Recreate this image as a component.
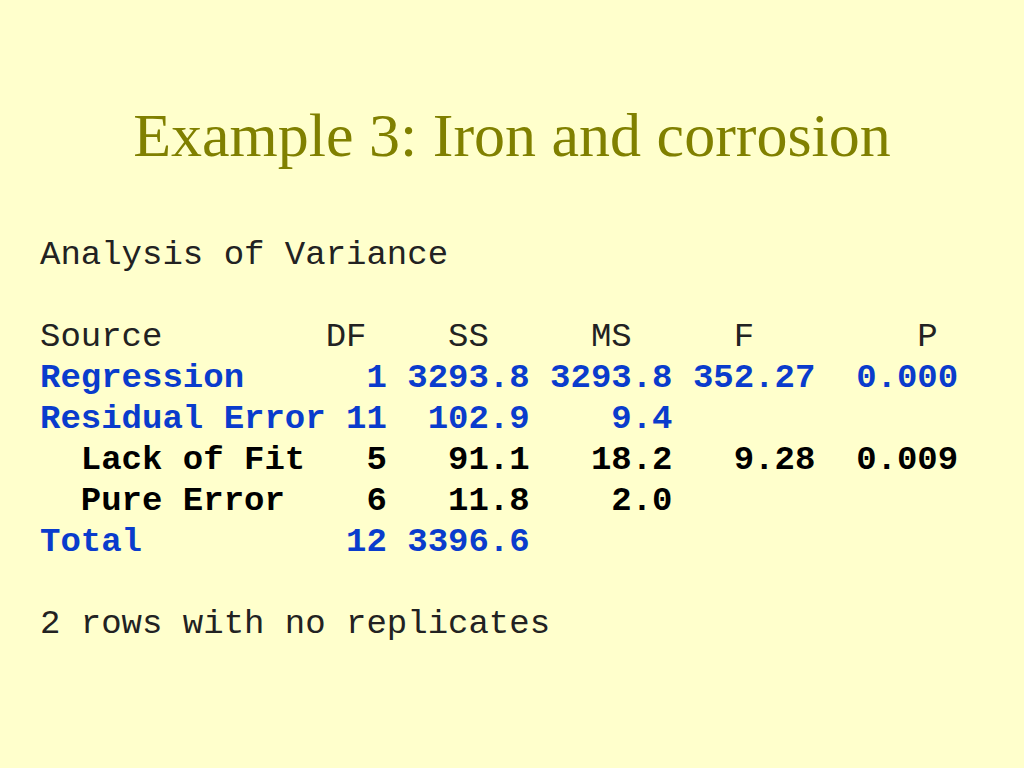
const B = "text-[#0a3ccc] font-bold";
const K = "text-black font-bold";

export default function App() {
  return (
    <div className="w-[1024px] h-[768px] bg-[#ffffcc] overflow-hidden">
      <h1 className="pt-[100px] h-[212px] text-center text-[62px] leading-[70px] text-[#808000] font-['Liberation_Serif',serif]">
        Example 3: Iron and corrosion
      </h1>
      <pre className="pl-[40px] pt-[23px] text-[34px] leading-[41px] text-[#222] font-['Liberation_Mono',monospace]">
        {"Analysis of Variance\n\n"}
        {"Source        DF    SS     MS     F        P\n"}
        <span className={B}>{"Regression      1 3293.8 3293.8 352.27  0.000\n"}</span>
        <span className={B}>{"Residual Error 11  102.9    9.4\n"}</span>
        <span className={K}>{"  Lack of Fit   5   91.1   18.2   9.28  0.009\n"}</span>
        <span className={K}>{"  Pure Error    6   11.8    2.0\n"}</span>
        <span className={B}>{"Total          12 3396.6\n"}</span>
        {"\n2 rows with no replicates"}
      </pre>
    </div>
  );
}
